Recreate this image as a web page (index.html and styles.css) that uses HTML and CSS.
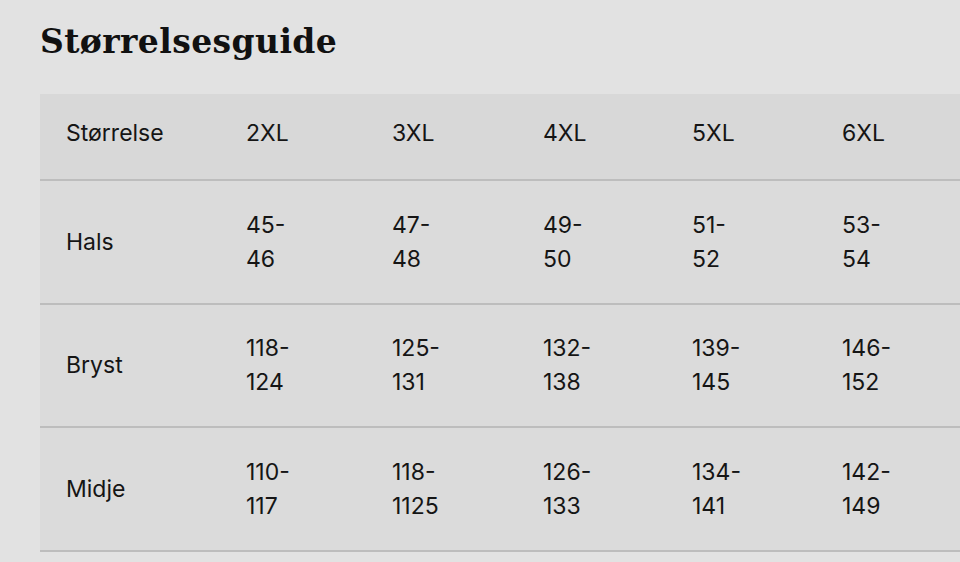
FILE: index.html
```html
<!DOCTYPE html>
<html lang="no">
<head>
<meta charset="utf-8">
<title>Størrelsesguide</title>
<link rel="stylesheet" href="styles.css">
</head>
<body>
<main class="page">
  <h1 class="title">Størrelsesguide</h1>
  <div class="table">
    <div class="row head">
      <div class="cell">Størrelse</div>
      <div class="cell">2XL</div>
      <div class="cell">3XL</div>
      <div class="cell">4XL</div>
      <div class="cell">5XL</div>
      <div class="cell">6XL</div>
    </div>
    <div class="row">
      <div class="cell">Hals</div>
      <div class="cell">45-<br>46</div>
      <div class="cell">47-<br>48</div>
      <div class="cell">49-<br>50</div>
      <div class="cell">51-<br>52</div>
      <div class="cell">53-<br>54</div>
    </div>
    <div class="row">
      <div class="cell">Bryst</div>
      <div class="cell">118-<br>124</div>
      <div class="cell">125-<br>131</div>
      <div class="cell">132-<br>138</div>
      <div class="cell">139-<br>145</div>
      <div class="cell">146-<br>152</div>
    </div>
    <div class="row">
      <div class="cell">Midje</div>
      <div class="cell">110-<br>117</div>
      <div class="cell">118-<br>1125</div>
      <div class="cell">126-<br>133</div>
      <div class="cell">134-<br>141</div>
      <div class="cell">142-<br>149</div>
    </div>
  </div>
</main>
</body>
</html>
```
FILE: styles.css
```css
html, body {
  margin: 0;
  padding: 0;
}
body {
  background: #e2e2e2;
  width: 960px;
  height: 562px;
  overflow: hidden;
  font-family: Inter, "Liberation Sans", sans-serif;
  color: #151515;
}
.page {
  padding: 20px 0 0 40px;
}
.title {
  margin: 0 0 30px 0;
  font-family: "DejaVu Serif", serif;
  font-weight: bold;
  font-size: 33px;
  line-height: 44px;
  letter-spacing: 0.4px;
  color: #111;
}
.table {
  width: 940px;
  background: #dbdbdb;
}
.row {
  display: grid;
  grid-template-columns: 180px 146px 151px 149px 150px 164px;
  align-items: center;
  height: 121.5px;
  border-bottom: 2px solid #bdbdbd;
  font-size: 23px;
  line-height: 34px;
}
.row.head {
  height: 78px;
  padding-bottom: 7px;
  background: #d8d8d8;
}
.cell {
  padding-left: 26px;
}
```
